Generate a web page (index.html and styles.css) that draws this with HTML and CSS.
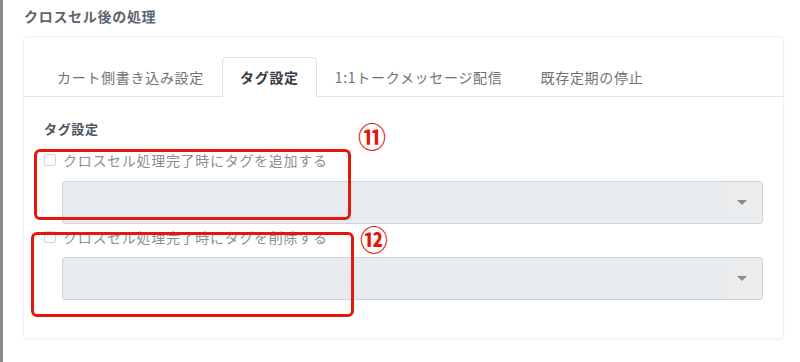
FILE: index.html
```html
<!DOCTYPE html>
<html lang="ja">
<head>
<meta charset="utf-8">
<link rel="stylesheet" href="styles.css">
</head>
<body>
<div class="page">
  <div class="strip"></div>
  <main class="main">
    <h2 class="title">クロスセル後の処理</h2>
    <section class="card">
      <div class="tabs">
        <div class="tab">カート側書き込み設定</div>
        <div class="tab active">タグ設定</div>
        <div class="tab">1:1トークメッセージ配信</div>
        <div class="tab">既存定期の停止</div>
      </div>
      <div class="panel">
        <h3 class="subtitle">タグ設定</h3>
        <label class="check-row first"><span class="box"></span>クロスセル処理完了時にタグを追加する</label>
        <div class="select first-select"><span class="select-value"></span><span class="select-arrow"><span class="tri"></span></span></div>
        <label class="check-row second"><span class="box"></span>クロスセル処理完了時にタグを削除する</label>
        <div class="select"><span class="select-value"></span><span class="select-arrow"><span class="tri"></span></span></div>

        <div class="mark mark1"></div>
        <div class="mark mark2"></div>
        <span class="num num1">⑪</span>
        <span class="num num2">⑫</span>
      </div>
    </section>
  </main>
</div>
</body>
</html>
```

FILE: styles.css
```css
* { box-sizing: border-box; }
html, body { margin: 0; padding: 0; background: #fff; }
body {
  font-family: "Noto Sans CJK JP", "Noto Sans", sans-serif;
  width: 800px;
  height: 362px;
  overflow: hidden;
}
.page { display: flex; height: 362px; }
.strip { width: 3px; background: #8c8c8c; flex: none; }
.main { flex: 1; padding: 6px 0 0 20px; }
.title {
  margin: 0 0 0 1px;
  font-size: 14px;
  line-height: 20px;
  font-weight: 700;
  color: #5c6470;
  letter-spacing: 0.05em;
}
.card {
  margin-top: 10px;
  width: 761px;
  border: 1px solid #eef0f2;
  border-radius: 4px;
  box-shadow: 0 1px 2px rgba(0,0,0,0.04);
  background: #fff;
}
.tabs {
  display: flex;
  padding: 20px 15px 0 14px;
  border-bottom: 1px solid #e2e5ea;
}
.tab {
  height: 40px;
  line-height: 38px;
  padding: 0 17px;
  border: 1px solid transparent;
  font-size: 14px;
  letter-spacing: 0.05em;
  color: #6d7278;
  margin-bottom: -1px;
  white-space: nowrap;
}
.tab:first-child { padding-left: 18px; }
.tab.active {
  border-color: #dde1e7;
  border-bottom-color: #fff;
  border-radius: 4px 4px 0 0;
  background: #fff;
  color: #333a42;
  font-weight: 700;
}
.tab:last-child { padding-left: 19px; }
.panel {
  position: relative;
  padding: 22px 20px 38px 20px;
}
.subtitle {
  margin: 0;
  font-size: 13px;
  line-height: 20px;
  font-weight: 700;
  color: #4c5560;
  letter-spacing: 0.05em;
}
.check-row {
  display: flex;
  align-items: center;
  font-size: 14px;
  line-height: 20px;
  color: #8a8f95;
  letter-spacing: 0.05em;
}
.check-row.first { margin-top: 11px; }
.check-row.second { margin-top: 3px; }
.box {
  width: 12px;
  height: 12px;
  border: 1px solid #d5d9dd;
  border-radius: 2px;
  background: #fff;
  margin-right: 7px;
  flex: none;
}
.select {
  display: flex;
  margin: 11px 0 0 18px;
  height: 43px;
  border: 1px solid #cdd5dc;
  border-radius: 3px;
  background: #e8ebee;
  overflow: hidden;
}
.check-row.second + .select { margin-top: 10px; }
.select-value { flex: 1; }
.select-arrow {
  width: 40px;
  background: #ebecee;
  display: flex;
  align-items: center;
  justify-content: center;
}
.tri {
  width: 0;
  height: 0;
  border-left: 5px solid transparent;
  border-right: 5px solid transparent;
  border-top: 5px solid #8b8b8b;
}
.mark {
  position: absolute;
  border: 3px solid #e3170a;
  border-radius: 6px;
}
.mark1 { left: 10px; top: 52px; width: 317px; height: 71px; }
.mark2 { left: 7px; top: 135px; width: 323px; height: 85px; }
.num {
  position: absolute;
  color: #e3170a;
  font-size: 28px;
  line-height: 30px;
  font-weight: 700;
}
.num1 { left: 334px; top: 24px; }
.num2 { left: 336px; top: 127px; }
```
